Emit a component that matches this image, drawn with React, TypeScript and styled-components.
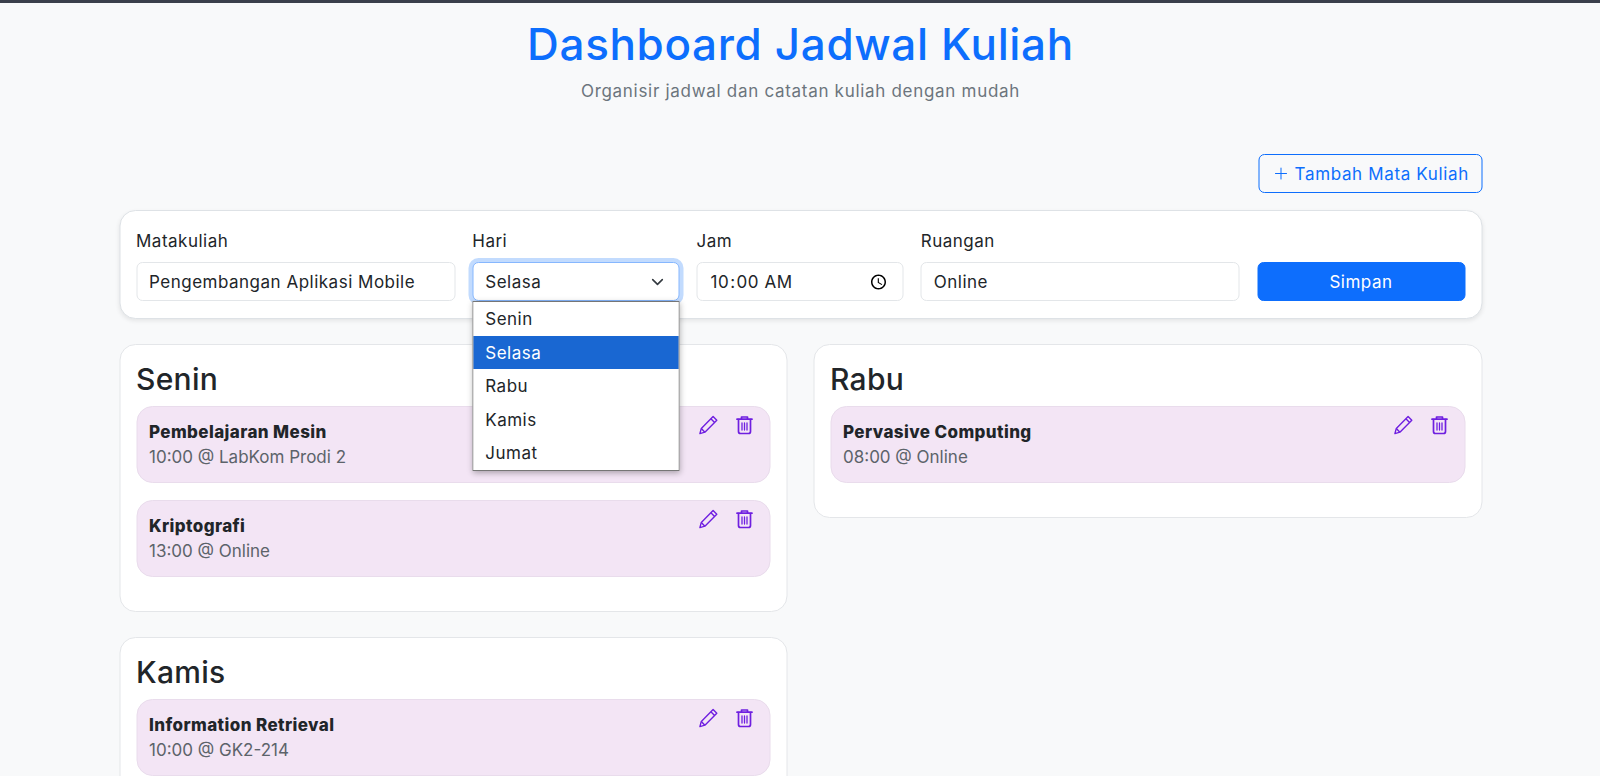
import React from "react";
import styled, { createGlobalStyle } from "styled-components";
import { Plus } from "lucide-react";

const GlobalStyle = createGlobalStyle`
  * { box-sizing: border-box; }
  html, body { height: 776px; overflow: hidden; }
  body {
    margin: 0;
    background: #f8f9fa;
    color: #212529;
    font-family: Inter, "Open Sans", sans-serif;
    font-size: 17px;
    letter-spacing: 0.5px;
    border-top: 3px solid #3a3f4b;
  }
  input, button { letter-spacing: inherit; }
`;

const Page = styled.div`
  width: 1363px;
  margin: 0 auto;
  transform: translateX(0.5px);
`;

const Header = styled.header`
  text-align: center;
  padding-top: 14px;
`;

const Title = styled.h1`
  margin: 0;
  font-size: 44px;
  line-height: 55px;
  font-weight: 500;
  color: #0d6efd;
  letter-spacing: 0.65px;
`;

const Subtitle = styled.p`
  margin: 7px 0 0;
  font-size: 17px;
  line-height: 24px;
  color: #6c757d;
  letter-spacing: 0.7px;
`;

const Toolbar = styled.div`
  display: flex;
  justify-content: flex-end;
  margin-top: 51px;
`;

const AddButton = styled.button`
  display: flex;
  align-items: center;
  gap: 4px;
  height: 39px;
  padding: 0 12px;
  background: transparent;
  border: 1px solid #0d6efd;
  border-radius: 6px;
  color: #0d6efd;
  font: inherit;
  letter-spacing: 0.65px;
`;

const FormCard = styled.form`
  display: grid;
  grid-template-columns: 319px 207px 207px 319px 1fr;
  column-gap: 17.25px;
  align-items: end;
  height: 109px;
  margin-top: 17px;
  padding: 16px 16px 17px;
  background: #fff;
  border: 1px solid #dee2e6;
  border-radius: 16px;
  box-shadow: 0 2px 4px rgba(0, 0, 0, 0.08);
`;

const Field = styled.div`
  position: relative;
`;

const Label = styled.label`
  display: block;
  margin-bottom: 9px;
  line-height: 24px;
  color: #212529;
`;

const TextInput = styled.input`
  display: block;
  width: 100%;
  height: 39px;
  padding: 1px 12px 0;
  background: #fff;
  border: 1px solid #e3e6e9;
  border-radius: 6px;
  color: #212529;
  font: inherit;
  outline: none;
`;

const SelectBox = styled.div`
  display: flex;
  align-items: center;
  justify-content: space-between;
  height: 39px;
  padding: 1px 13px 0 12px;
  background: #fff;
  border: 1px solid #86b7fe;
  border-radius: 6px;
  box-shadow: 0 0 0 4px rgba(13, 110, 253, 0.25);
`;

const Menu = styled.ul`
  position: absolute;
  z-index: 5;
  top: 100%;
  left: 0;
  right: 0;
  margin: 0;
  padding: 0;
  list-style: none;
  background: #fff;
  border: 1px solid #767676;
  box-shadow: 0 2px 6px rgba(0, 0, 0, 0.3);
`;

const MenuItem = styled.li<{ $active?: boolean }>`
  height: 33.6px;
  padding: 0 12px;
  line-height: 35px;
  background: ${(p) => (p.$active ? "#1967d2" : "#fff")};
  color: ${(p) => (p.$active ? "#fff" : "#212529")};
`;

const SaveButton = styled.button`
  height: 39px;
  padding-top: 1px;
  background: #0d6efd;
  border: 1px solid #0d6efd;
  border-radius: 6px;
  color: #fff;
  font: inherit;
`;

const Columns = styled.div`
  display: grid;
  grid-template-columns: 668px 669px;
  justify-content: space-between;
  align-items: start;
  margin-top: 25px;
`;

const Column = styled.div`
  display: flex;
  flex-direction: column;
  gap: 25px;
`;

const DayCard = styled.section`
  padding: 16px 16px 16.5px;
  background: #fff;
  border: 1px solid #e4e6e9;
  border-radius: 16px;
`;

const DayTitle = styled.h2`
  margin: 0 0 9px;
  font-size: 30px;
  line-height: 36px;
  font-weight: 500;
  color: #212529;
  letter-spacing: 0.3px;
`;

const Course = styled.article`
  display: flex;
  justify-content: space-between;
  height: 77px;
  margin-bottom: 17px;
  padding: 13px 12px 12px;
  background: #f3e5f5;
  border: 1px solid #e9dcec;
  border-radius: 16px;
`;

const CourseName = styled.div`
  line-height: 24px;
  font-weight: 800;
  color: #212529;
  letter-spacing: 0.4px;
`;

const CourseMeta = styled.div`
  margin-top: 1px;
  line-height: 24px;
  color: #5c636a;
  letter-spacing: 0;
`;

const Actions = styled.div`
  display: flex;
  gap: 16px;
  height: 22px;
  margin: -5px 3px 0 0;
  color: #6f1fe0;
`;

function PencilIcon() {
  return (
    <svg width="20" height="20" viewBox="0 0 20 20" fill="none" stroke="currentColor" strokeWidth="1.4" strokeLinejoin="round">
      <path d="M14.6 1.6 18.3 5.3 6.4 17.2 1.4 18.6 2.8 13.4Z" />
      <path d="M12.4 3.8 16.1 7.5M2.8 13.4 6.4 17.2" />
    </svg>
  );
}

function TrashIcon() {
  return (
    <svg width="20" height="20" viewBox="0 0 20 20" fill="none" stroke="currentColor" strokeWidth="1.7" strokeLinecap="round" strokeLinejoin="round">
      <path d="M2.5 4.2h15M7 4V2h6v2" />
      <path d="M4 4.5V16.5A2 2 0 0 0 6 18.5H14A2 2 0 0 0 16 16.5V4.5" />
      <path d="M7.5 8v7M10 8v7M12.5 8v7" strokeWidth="1.3" />
    </svg>
  );
}

const days = [
  {
    name: "Senin",
    courses: [
      { name: "Pembelajaran Mesin", meta: "10:00 @ LabKom Prodi 2" },
      { name: "Kriptografi", meta: "13:00 @ Online" },
    ],
  },
  { name: "Kamis", courses: [{ name: "Information Retrieval", meta: "10:00 @ GK2-214" }] },
];

const rabu = { name: "Rabu", courses: [{ name: "Pervasive Computing", meta: "08:00 @ Online" }] };

function Day({ day }: { day: typeof rabu }) {
  return (
    <DayCard>
      <DayTitle>{day.name}</DayTitle>
      {day.courses.map((c) => (
        <Course key={c.name}>
          <div>
            <CourseName>{c.name}</CourseName>
            <CourseMeta>{c.meta}</CourseMeta>
          </div>
          <Actions>
            <PencilIcon />
            <TrashIcon />
          </Actions>
        </Course>
      ))}
    </DayCard>
  );
}

export default function App() {
  return (
    <Page>
      <GlobalStyle />
      <Header>
        <Title>Dashboard Jadwal Kuliah</Title>
        <Subtitle>Organisir jadwal dan catatan kuliah dengan mudah</Subtitle>
      </Header>
      <Toolbar>
        <AddButton type="button">
          <Plus size={19} strokeWidth={1.3} />
          Tambah Mata Kuliah
        </AddButton>
      </Toolbar>
      <FormCard>
        <Field>
          <Label>Matakuliah</Label>
          <TextInput readOnly value="Pengembangan Aplikasi Mobile" />
        </Field>
        <Field>
          <Label>Hari</Label>
          <SelectBox>
            Selasa
            <svg width="16" height="16" viewBox="0 0 16 16" fill="none" stroke="#343a40" strokeWidth="2" strokeLinecap="round" strokeLinejoin="round">
              <path d="m2 5 6 6 6-6" transform="translate(1.6 1.6) scale(0.8)" />
            </svg>
          </SelectBox>
          <Menu>
            <MenuItem>Senin</MenuItem>
            <MenuItem $active>Selasa</MenuItem>
            <MenuItem>Rabu</MenuItem>
            <MenuItem>Kamis</MenuItem>
            <MenuItem>Jumat</MenuItem>
          </Menu>
        </Field>
        <Field>
          <Label>Jam</Label>
          <TextInput type="time" defaultValue="10:00" />
        </Field>
        <Field>
          <Label>Ruangan</Label>
          <TextInput readOnly value="Online" />
        </Field>
        <SaveButton type="button">Simpan</SaveButton>
      </FormCard>
      <Columns>
        <Column>
          {days.map((d) => (
            <Day key={d.name} day={d} />
          ))}
        </Column>
        <Column>
          <Day day={rabu} />
        </Column>
      </Columns>
    </Page>
  );
}
